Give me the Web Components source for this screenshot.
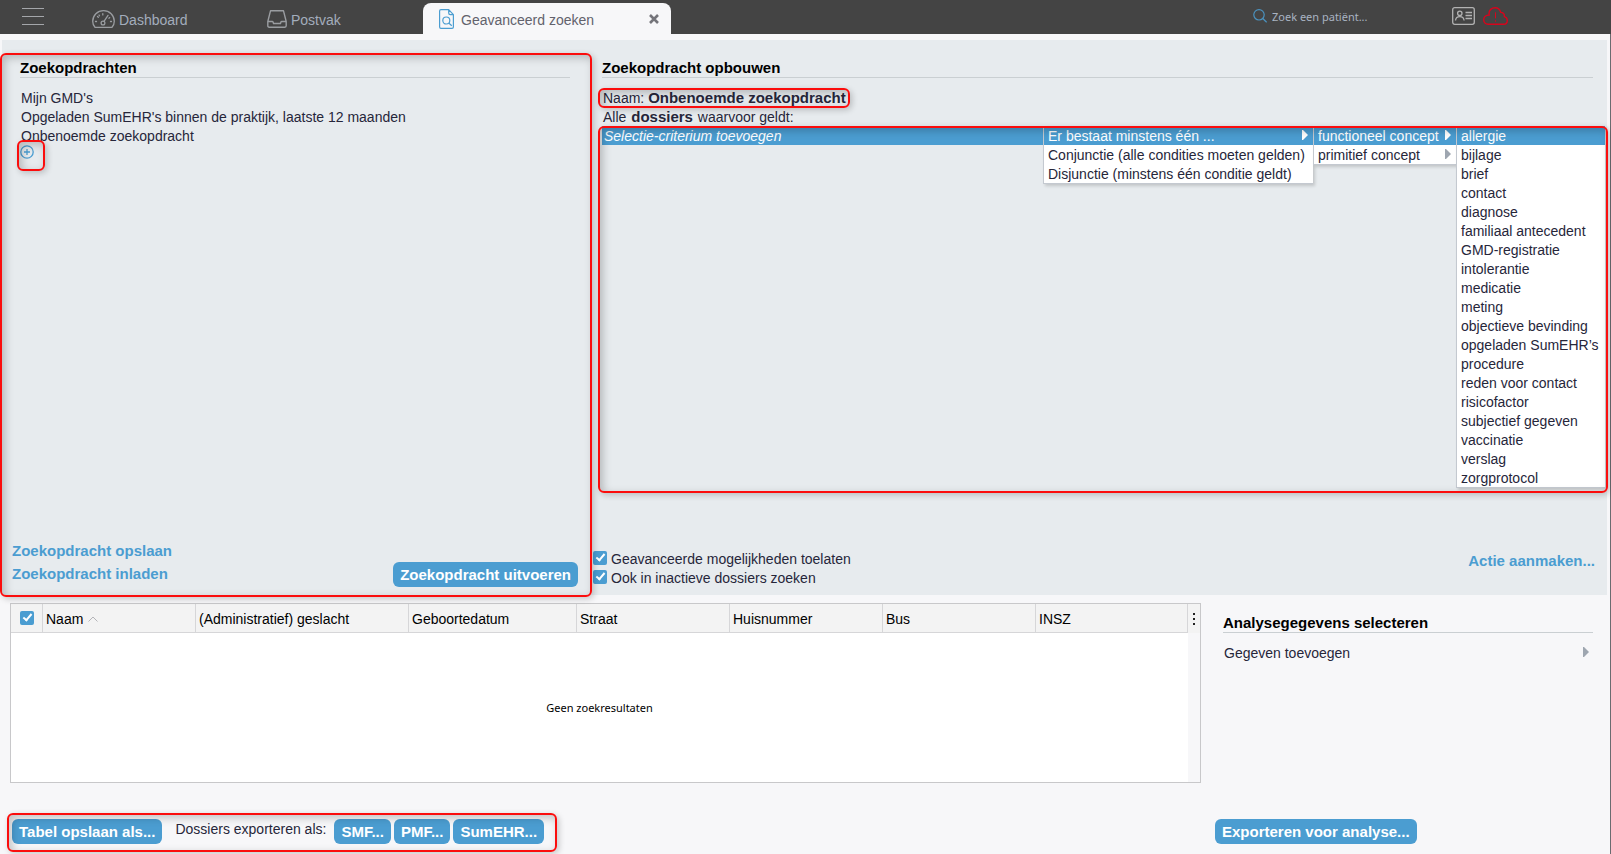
<!DOCTYPE html>
<html lang="nl">
<head>
<meta charset="utf-8">
<title>Geavanceerd zoeken</title>
<style>
  html, body { height: 100%; }
  body { margin: 0; font: 14px/19px "Liberation Sans", Arial, sans-serif; color: #26263a; background: #f7f7f9; }
</style>
</head>
<body>
<search-app></search-app>
<script>
const base = `
  *, *::before, *::after { box-sizing: border-box; }
  button { font: inherit; color: inherit; background: none; border: 0; margin: 0; padding: 0; text-align: left; cursor: pointer; }
  ul { list-style: none; margin: 0; padding: 0; }
  a { color: inherit; text-decoration: none; }
  svg { display: block; fill: none; }
`;
const define = (name, html, css) => {
  const template = document.createElement('template');
  template.innerHTML = `<style>${base}${css}</style>${html}`;
  customElements.define(name, class extends HTMLElement {
    constructor() {
      super();
      this.attachShadow({ mode: 'open' }).append(template.content.cloneNode(true));
    }
  });
};

/* Red frame drawn round the slotted content; --reach sets how far it extends. */
define('call-out', `<slot></slot>`, `
  :host { display: block; position: relative; }
  :host::after { content: ""; position: absolute; inset: var(--reach, 0); border: 2px solid #fb0d0d; border-radius: 6px;
    box-shadow: 2px 2px 6px rgba(0,0,0,.2), inset 3px 3px 8px rgba(0,0,0,.22); pointer-events: none; z-index: 2; box-sizing: border-box; }
`);

define('section-title', `<h2><slot></slot></h2>`, `
  :host { display: block; border-bottom: 1px solid #cacfd2; }
  h2 { margin: 0; padding-top: 1px; font-size: 15px; line-height: 19px; color: #000; }
`);

define('action-button', `<button type="button"><slot></slot></button>`, `
  :host { display: inline-block; }
  button { display: block; height: 25px; padding: 0 7px; border-radius: 6px; background: #4b9dd1; color: #fff; font-weight: bold; font-size: 15px; line-height: 25px; white-space: nowrap; }
`);

define('action-link', `<a href="#"><slot></slot></a>`, `
  :host { display: block; }
  a { color: #4b9dd1; font-weight: bold; font-size: 15px; line-height: 23px; white-space: nowrap; }
`);

customElements.define('tick-box', class extends HTMLElement {
  constructor() {
    super();
    this.attachShadow({ mode: 'open' }).innerHTML = `<style>${base}
      :host { display: block; }
      label { display: flex; gap: 4px; padding-top: 1px; line-height: 18px; }
      input { appearance: none; flex: none; position: relative; width: 14px; height: 14px; margin: 1px 0 0; border-radius: 2px; background: #4b9dd1; }
      input:checked::before { content: ""; position: absolute; left: 5px; top: 1px; width: 5px; height: 9px; border: solid #fff; border-width: 0 2px 2px 0; transform: rotate(40deg); }
    </style><label><input type="checkbox" checked><slot></slot></label>`;
    if (this.hasAttribute('label')) this.shadowRoot.querySelector('input').setAttribute('aria-label', this.getAttribute('label'));
  }
});

define('nav-tab', `<button type="button"><slot name="icon"></slot><slot></slot></button><slot name="close"></slot>`, `
  :host { display: flex; align-items: center; color: #a3adbc; height: 31px; }
  :host([active]) { color: #62626c; background: #f7f7f9; border-radius: 8px 8px 0 0; }
  button { display: flex; align-items: center; gap: 4px; padding-top: 3px; line-height: 28px; white-space: nowrap; }
  :host([active]) button { gap: 7px; }
  ::slotted(svg) { margin-bottom: 2px; }
`);

define('top-bar', `
  <header>
    <button class="burger" type="button" aria-label="Menu"><i></i><i></i><i></i></button>
    <nav>
      <nav-tab class="dash"><svg slot="icon" width="23" height="18" viewBox="0 0 23 18" stroke="#9a9da1" stroke-width="1.3"><path d="M3 17.3h17c1.400-1.500 2.300-3.500 2.300-6C22.300 5.300 17.500.7 11.500.7S.7 5.300.7 11.300c0 2.500.900 4.500 2.300 6z"/><circle cx="11" cy="13" r="1.900"/><path d="M12 11.400l4-6M3.500 11.500h1M18.500 11.500h1M5.500 6.500l.8.700M10.800 3.700v1.200M16.900 8.200l.8-.600M7 5l.5.800" stroke-linecap="round"/></svg>Dashboard</nav-tab>
      <nav-tab class="post"><svg slot="icon" width="20" height="18" viewBox="0 0 20 18" stroke="#9a9da1" stroke-width="1.400" stroke-linejoin="round"><path d="M.8 11.500L3.500.8h13l2.700 10.700v4.300q0 1.400-1.400 1.400H2.200Q.8 17.200.8 15.800zM.8 11.500h4.400q.8 0 1 .8l.3 1.200h7l.3-1.200q.2-.8 1-.8h4.400"/></svg>Postvak</nav-tab>
      <nav-tab class="adv" active><svg slot="icon" width="15" height="20" viewBox="0 0 15 20" stroke="#4b9dd1" stroke-width="1.200" stroke-linejoin="round"><path d="M9.700.6H2Q.6.6.6 2v16q0 1.400 1.400 1.400h11q1.400 0 1.400-1.400V5.600zM9.700.6V4q0 1.600 1.600 1.600h3.100"/><circle cx="7.300" cy="11.500" r="3.500"/><path d="M10 14.200l2.800 2.600"/></svg>Geavanceerd zoeken
        <button slot="close" class="close" type="button" aria-label="Sluiten"><svg width="10" height="10" viewBox="0 0 10 10" stroke="#74747a" stroke-width="2.600"><path d="M1 1l8 8M9 1L1 9"/></svg></button></nav-tab>
    </nav>
    <label class="search"><svg width="14" height="14" viewBox="0 0 14 14" stroke="#4b93c0" stroke-width="1.200"><circle cx="6" cy="5.800" r="5.200"/><path d="M9.800 9.500l3.800 3.800"/></svg><input type="text" placeholder="Zoek een patiënt..." aria-label="Zoek een patiënt"></label>
    <button class="icon" type="button" aria-label="Kaart"><svg width="23" height="18" viewBox="0 0 23 18" stroke="#b2b2b2" stroke-width="1.300"><rect x=".7" y=".7" width="21.600" height="16.600" rx="2"/><circle cx="7.800" cy="6.300" r="2.200"/><path d="M3.500 13.500c.3-2.600 2-3.800 4.300-3.800s4 1.200 4.300 3.800M13.500 5.500h6.500M13.500 8.500h6.500M13.500 11.500h6.500"/></svg></button>
    <button class="icon" type="button" aria-label="Geen verbinding"><svg width="25" height="18" viewBox="0 0 25 18" stroke="#d8041c" stroke-width="1.400"><path d="M5 17.200h15.500c2.200 0 3.800-1.700 3.800-3.800 0-1.900-1.200-3.300-2.900-3.800.2-2.600-1.300-4.200-3.600-4.200C16.800 2.500 14.800.8 12.200.8 8.600.8 6 3.200 6 6.300c0 .7.100 1.200.2 1.700C3 8 .7 10 .7 12.800c0 2.500 1.900 4.400 4.300 4.400z"/><path d="M12.500 5.300v6M12.500 13.300v1.400" stroke-width="1"/></svg></button>
  </header>`, `
  :host { display: block; }
  header { display: flex; align-items: flex-start; height: 34px; background: #444; padding-right: 103px; }
  .burger { display: grid; gap: 7px; width: 22px; margin: 8px 48px 0 22px; }
  .burger i { height: 1px; background: #a4a6aa; }
  nav { display: flex; flex: 1; margin-top: 3px; }
  .dash { width: 175px; }
  .post { width: 156px; }
  .adv { width: 248px; padding: 0 12px 0 16px; justify-content: space-between; }
  .close { height: 10px; }
  .search { display: flex; align-items: center; gap: 5px; width: 199px; margin-top: 5px; }
  .search svg { margin-bottom: 1px; }
  input { flex: 1; min-width: 0; height: 22px; padding: 0; border: 0; background: none; outline: 0; color: #fff; font: 11px "Noto Sans", "Open Sans", sans-serif; }
  input::placeholder { color: #a9b3c2; opacity: 1; }
  .icon { margin: 7px 0 0 0; }
  .icon + .icon { margin-left: 8px; }
`);

define('query-list', `
  <call-out class="frame">
    <section>
      <section-title>Zoekopdrachten</section-title>
      <ul>
        <li><button type="button">Mijn GMD's</button></li>
        <li><button type="button">Opgeladen SumEHR's binnen de praktijk, laatste 12 maanden</button></li>
        <li><button type="button">Onbenoemde zoekopdracht</button></li>
      </ul>
      <call-out class="add"><button type="button" aria-label="Toevoegen"><svg width="14" height="14" viewBox="0 0 14 14" stroke="#4b9dd1" stroke-width="1.300"><circle cx="7" cy="7" r="6.200"/><path d="M7 4v6M4 7h6"/></svg></button></call-out>
      <footer>
        <div><action-link>Zoekopdracht opslaan</action-link><action-link>Zoekopdracht inladen</action-link></div>
        <action-button>Zoekopdracht uitvoeren</action-button>
      </footer>
    </section>
  </call-out>`, `
  :host { display: flex; padding-top: 13px; }
  .frame { flex: 1; display: flex; --reach: 0 0 -2px -2px; }
  section { flex: 1; display: flex; flex-direction: column; padding: 4px 0 8px; }
  section-title { margin: 0 22px 10px 18px; }
  ul { padding-left: 19px; }
  li button { display: block; padding-top: 1px; line-height: 18px; }
  .add { align-self: flex-start; margin-left: 18px; --reach: -5px -11px -12px -3px; }
  .add button { display: block; }
  footer { display: flex; justify-content: space-between; align-items: flex-end; margin-top: auto; padding: 0 14px 0 10px; }
  footer div { margin-bottom: 2px; }
`);

customElements.define('cascade-menu', class extends HTMLElement {
  constructor() {
    super();
    const root = this.attachShadow({ mode: 'open' });
    root.innerHTML = `<style>${base}
      :host { display: block; background: #fff; border-left: 1px solid #c4c9d0; border-bottom: 1px solid #c4c9d0; box-shadow: 2px 2px 3px rgba(0,0,0,.16); color: #26263a; }
      button { display: flex; width: 100%; align-items: center; justify-content: space-between; gap: 5px; padding: 1px 5px 0 4px; white-space: nowrap; line-height: 18px; }
      li:first-child button { background: #4b9dd1; color: #fff; }
      svg { flex: none; margin-bottom: 2px; fill: #9ea6b0; }
      li:first-child svg { fill: #fff; }
    </style><ul role="menu"></ul>`;
    const arrows = Number(this.getAttribute('arrows') || 0);
    root.querySelector('ul').innerHTML = this.getAttribute('items').split('|').map((t, i) =>
      `<li role="none"><button type="button" role="menuitem"><span>${t}</span>${i < arrows ? '<svg width="6" height="10" viewBox="0 0 6 10"><path d="M0 0h1l5 5-5 5H0z"/></svg>' : ''}</button></li>`).join('');
  }
});

define('query-builder', `
  <section-title>Zoekopdracht opbouwen</section-title>
  <call-out class="name">Naam: <b>Onbenoemde zoekopdracht</b></call-out>
  <p>Alle <b>dossiers</b> waarvoor geldt:</p>
  <call-out class="menus"><div class="row">
    <button type="button" class="criterion">Selectie-criterium toevoegen</button>
    <cascade-menu class="m1" arrows="1" items="Er bestaat minstens één ...|Conjunctie (alle condities moeten gelden)|Disjunctie (minstens één conditie geldt)"></cascade-menu>
    <cascade-menu class="m2" arrows="2" items="functioneel concept|primitief concept"></cascade-menu>
    <cascade-menu class="m3" items="allergie|bijlage|brief|contact|diagnose|familiaal antecedent|GMD-registratie|intolerantie|medicatie|meting|objectieve bevinding|opgeladen SumEHR’s|procedure|reden voor contact|risicofactor|subjectief gegeven|vaccinatie|verslag|zorgprotocol"></cascade-menu>
  </div></call-out>
  <footer>
    <div><tick-box>Geavanceerde mogelijkheden toelaten</tick-box><tick-box>Ook in inactieve dossiers zoeken</tick-box></div>
    <action-link>Actie aanmaken...</action-link>
  </footer>`, `
  :host { display: flex; flex-direction: column; padding: 17px 0 8px 10px; }
  section-title { margin: 0 14px 10px 0; }
  b { font-size: 15px; line-height: 15px; }
  .name { align-self: flex-start; padding: 1px 0 0 1px; line-height: 18px; --reach: 0 -4px -1px -4px; }
  p { margin: 0; padding: 1px 0 0 1px; line-height: 18px; }
  p b { margin: 0 1px; }
  .menus { margin-right: 2px; --reach: 0 -3px -5px -4px; }
  .row { display: flex; align-items: flex-start; }
  .criterion { flex: 1; padding: 1px 0 0 2px; background: #4b9dd1; color: #fff; font-style: italic; line-height: 18px; }
  .m1 { width: 270px; }
  .m2 { width: 143px; }
  .m3 { width: 149px; }
  footer { display: flex; justify-content: space-between; margin: auto 12px 0 -9px; }
`);

define('result-table', `
  <table>
    <colgroup><col class="c1"><col class="c2"><col class="c3"><col class="c4"><col class="c2"><col class="c2"><col class="c2"><col class="c5"><col class="c6"></colgroup>
    <thead><tr>
      <th class="check"><tick-box label="Alles selecteren"></tick-box></th>
      <th><span>Naam<svg width="10" height="6" viewBox="0 0 10 6" stroke="#b4b4b8"><path d="M.5 5.500L5 1l4.500 4.500"/></svg></span></th>
      <th>(Administratief) geslacht</th><th>Geboortedatum</th><th>Straat</th><th>Huisnummer</th><th>Bus</th><th>INSZ</th>
      <th class="more"><button type="button" aria-label="Kolommen"><i></i><i></i><i></i></button></th>
    </tr></thead>
    <tbody><tr><td class="empty" colspan="8">Geen zoekresultaten</td><td class="gutter"></td></tr></tbody>
  </table>`, `
  :host { display: block; border: 1px solid #c8c8ca; }
  table { width: 100%; height: 100%; table-layout: fixed; border-spacing: 0; color: #000; }
  .c1 { width: 32px; } .c2 { width: 153px; } .c3 { width: 213px; } .c4 { width: 168px; } .c5 { width: 152px; } .c6 { width: 12px; }
  th { height: 29px; padding: 2px 0 0 3px; text-align: left; font-weight: normal; background: #f3f3f3; border: solid #d6d6d8; border-width: 0 1px 1px 0; white-space: nowrap; }
  th span { display: flex; align-items: center; gap: 5px; }
  th.check { padding: 0 0 2px 9px; }
  th.more { padding: 0; border: 0; }
  .more button { display: grid; gap: 3px; margin: 0 auto; }
  .more i { width: 2px; height: 2px; background: #222; }
  td { padding: 0; }
  .empty { background: #fff; text-align: center; font: 11px "Noto Sans", "Open Sans", sans-serif; }
  .gutter { background: #f7f7f9; }
`);

define('analysis-panel', `
  <section-title>Analysegegevens selecteren</section-title>
  <button type="button" class="add">Gegeven toevoegen<svg width="6" height="10" viewBox="0 0 6 10"><path d="M0 0h1l5 5-5 5H0z"/></svg></button>
  <action-button>Exporteren voor analyse...</action-button>`, `
  :host { display: flex; flex-direction: column; align-items: stretch; padding-top: 9px; }
  section-title { margin: 0 14px 10px 8px; }
  .add { display: flex; justify-content: space-between; align-items: center; margin: 0 18px 0 9px; padding-top: 1px; line-height: 18px; }
  .add svg { fill: #9ea6b0; margin-bottom: 2px; }
  action-button { align-self: flex-start; margin-top: auto; }
`);

define('search-app', `
  <top-bar></top-bar>
  <main>
    <div class="query"><query-list></query-list><query-builder></query-builder></div>
    <div class="results">
      <div class="left">
        <result-table></result-table>
        <call-out class="export"><div>
          <action-button>Tabel opslaan als...</action-button>
          <span>Dossiers exporteren als:</span>
          <action-button>SMF...</action-button><action-button>PMF...</action-button><action-button>SumEHR...</action-button>
        </div></call-out>
      </div>
      <analysis-panel></analysis-panel>
    </div>
  </main>`, `
  :host { display: flex; flex-direction: column; min-height: 100%; height: 100%; }
  main { flex: 1; display: flex; flex-direction: column; padding: 6px 3px 0 2px; border-right: 1px solid #6a6c70; }
  .query { flex: 555 1 0; display: grid; grid-template-columns: 590fr 1015fr; background: #e7ebee; }
  .results { flex: 241 1 0; display: grid; grid-template-columns: 1191fr 392fr; gap: 14px; padding: 8px 0 10px 8px; }
  .left { display: flex; flex-direction: column; }
  result-table { flex: 1; margin-bottom: 36px; }
  .export { align-self: flex-start; margin-left: 2px; --reach: -6px -13px -8px -5px; }
  .export div { display: flex; gap: 3px; }
  .export span { margin: 1px 5px 0 10px; }
`);
</script>
</body>
</html>
